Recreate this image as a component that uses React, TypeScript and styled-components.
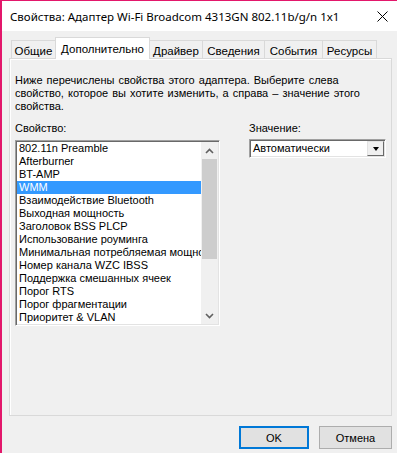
import styled, { createGlobalStyle } from 'styled-components'

const GlobalStyle = createGlobalStyle`
  html, body {
    margin: 0;
    padding: 0;
    background: #f0f0f0;
  }
  body {
    font-family: "Liberation Sans", Arial, sans-serif;
    color: #000;
  }
`

const Window = styled.div`
  width: 397px;
  height: 453px;
  box-sizing: border-box;
  border-top: 1px solid #e3176b;
  border-left: 2px solid #e3176b;
  background: #f0f0f0;
  display: flex;
  flex-direction: column;
  overflow: hidden;
`

const TitleBar = styled.div`
  height: 30px;
  flex-shrink: 0;
  background: #fff;
  display: flex;
  align-items: center;
  justify-content: space-between;
  padding: 0 6px 0 8px;
`

const Title = styled.span`
  font-family: "Noto Sans", "Open Sans", sans-serif;
  font-size: 11.5px;
  white-space: nowrap;
`

const CloseButton = styled.div`
  width: 18px;
  height: 18px;
  display: flex;
  align-items: center;
  justify-content: center;
`

const Body = styled.div`
  flex: 1;
  display: flex;
  flex-direction: column;
  padding: 6px 5px 0 7px;
`

const TabStrip = styled.div`
  height: 22px;
  display: flex;
  align-items: flex-end;
  padding-left: 3px;
  margin-bottom: -1px;
  position: relative;
  z-index: 1;
`

const Tab = styled.div<{ $active?: boolean; $w: number }>`
  box-sizing: border-box;
  width: ${({ $w }) => $w}px;
  height: ${({ $active }) => ($active ? 22 : 18)}px;
  margin-bottom: ${({ $active }) => ($active ? 0 : 1)}px;
  margin-left: -1px;
  border: 1px solid #d9d9d9;
  border-bottom: none;
  background: ${({ $active }) => ($active ? '#fff' : '#f0f0f0')};
  font-family: "Liberation Sans", Arial, sans-serif;
  font-size: 11.5px;
  display: flex;
  justify-content: center;
  align-items: center;
  padding-top: ${({ $active }) => ($active ? 0 : 2)}px;
  white-space: nowrap;
`

const Panel = styled.div`
  box-sizing: border-box;
  height: 358px;
  flex-shrink: 0;
  border: 1px solid #d9d9d9;
  box-shadow: inset 1px 1px 0 #fff;
  padding: 15px 5px 0 5px;
  display: flex;
  flex-direction: column;
`

const Description = styled.p`
  margin: 0 0 9px;
  font-size: 11px;
  line-height: 13px;
  word-spacing: 1px;
`

const Columns = styled.div`
  display: flex;
  gap: 29px;
`

const Column = styled.div<{ $w: number }>`
  width: ${({ $w }) => $w}px;
  display: flex;
  flex-direction: column;
`

const Label = styled.div`
  font-size: 11px;
  line-height: 13px;
  margin-bottom: 5px;
`

const ListBox = styled.div`
  box-sizing: border-box;
  height: 186px;
  border: 1px solid;
  border-color: #a0a0a0 #fff #fff #a0a0a0;
  box-shadow: inset 1px 1px 0 #696969, inset -1px -1px 0 #e3e3e3;
  background: #fff;
  padding: 1px;
  display: flex;
`

const Items = styled.div`
  flex: 1;
  min-width: 0;
  display: flex;
  flex-direction: column;
`

const Item = styled.div<{ $selected?: boolean }>`
  height: 13px;
  line-height: 13px;
  font-size: 11px;
  padding-left: 2px;
  white-space: nowrap;
  overflow: hidden;
  background: ${({ $selected }) => ($selected ? '#3399ff' : 'transparent')};
  color: ${({ $selected }) => ($selected ? '#fff' : '#000')};
`

const ScrollBar = styled.div`
  width: 17px;
  background: #f0f0f0;
  display: flex;
  flex-direction: column;
`

const ScrollArrow = styled.div`
  height: 17px;
  display: flex;
  align-items: center;
  justify-content: center;
`

const Track = styled.div`
  flex: 1;
`

const Thumb = styled.div`
  height: 100px;
  margin: 0 1px;
  background: #cdcdcd;
`

const Select = styled.div`
  box-sizing: border-box;
  height: 19px;
  margin-top: -1px;
  border: 1px solid;
  border-color: #a0a0a0 #fff #fff #a0a0a0;
  box-shadow: inset 1px 1px 0 #696969, inset -1px -1px 0 #e3e3e3;
  background: #fff;
  padding: 1px;
  display: flex;
  align-items: stretch;
`

const SelectValue = styled.div`
  flex: 1;
  font-size: 11px;
  line-height: 15px;
  padding-left: 2px;
`

const DropButton = styled.div`
  box-sizing: border-box;
  width: 17px;
  background: #f0f0f0;
  border: 1px solid;
  border-color: #e3e3e3 #696969 #696969 #e3e3e3;
  display: flex;
  align-items: center;
  justify-content: center;
`

const Triangle = styled.div`
  width: 0;
  height: 0;
  border-left: 3.5px solid transparent;
  border-right: 3.5px solid transparent;
  border-top: 4px solid #000;
`

const Footer = styled.div`
  display: flex;
  justify-content: flex-end;
  gap: 10px;
  padding-top: 10px;
`

const Button = styled.button<{ $primary?: boolean; $w: number }>`
  box-sizing: border-box;
  width: ${({ $w }) => $w}px;
  height: 23px;
  padding: 0;
  background: #e1e1e1;
  border: 1px solid ${({ $primary }) => ($primary ? '#0078d7' : '#adadad')};
  box-shadow: ${({ $primary }) => ($primary ? 'inset 0 0 0 1px #0078d7' : 'none')};
  font-family: "Liberation Sans", Arial, sans-serif;
  font-size: 11px;
  color: #000;
`

const tabs = [
  { label: 'Общие', w: 45 },
  { label: 'Дополнительно', w: 95, active: true },
  { label: 'Драйвер', w: 54 },
  { label: 'Сведения', w: 63 },
  { label: 'События', w: 59 },
  { label: 'Ресурсы', w: 55 },
]

const properties = [
  '802.11n Preamble',
  'Afterburner',
  'BT-AMP',
  'WMM',
  'Взаимодействие Bluetooth',
  'Выходная мощность',
  'Заголовок BSS PLCP',
  'Использование роуминга',
  'Минимальная потребляемая мощность',
  'Номер канала WZC IBSS',
  'Поддержка смешанных ячеек',
  'Порог RTS',
  'Порог фрагментации',
  'Приоритет & VLAN',
]

const Chevron = ({ up }: { up?: boolean }) => (
  <svg width="9" height="6" viewBox="0 0 9 6">
    <path
      d={up ? 'M1 5 L4.5 1.5 L8 5' : 'M1 1 L4.5 4.5 L8 1'}
      fill="none"
      stroke="#606060"
      strokeWidth="1.6"
    />
  </svg>
)

export default function App() {
  return (
    <>
      <GlobalStyle />
      <Window>
        <TitleBar>
          <Title>Свойства: Адаптер Wi-Fi Broadcom 4313GN 802.11b/g/n 1x1</Title>
          <CloseButton>
            <svg width="11" height="11" viewBox="0 0 11 11">
              <path d="M0.5 0.5 L10.5 10.5 M10.5 0.5 L0.5 10.5" stroke="#000" strokeWidth="1" />
            </svg>
          </CloseButton>
        </TitleBar>
        <Body>
          <TabStrip>
            {tabs.map((t) => (
              <Tab key={t.label} $w={t.w} $active={t.active}>
                {t.label}
              </Tab>
            ))}
          </TabStrip>
          <Panel>
            <Description>
              Ниже перечислены свойства этого адаптера. Выберите слева
              <br />
              свойство, которое вы хотите изменить, а справа – значение этого
              <br />
              свойства.
            </Description>
            <Columns>
              <Column $w={205}>
                <Label>Свойство:</Label>
                <ListBox>
                  <Items>
                    {properties.map((p) => (
                      <Item key={p} $selected={p === 'WMM'}>
                        {p}
                      </Item>
                    ))}
                  </Items>
                  <ScrollBar>
                    <ScrollArrow>
                      <Chevron up />
                    </ScrollArrow>
                    <Track>
                      <Thumb />
                    </Track>
                    <ScrollArrow>
                      <Chevron />
                    </ScrollArrow>
                  </ScrollBar>
                </ListBox>
              </Column>
              <Column $w={137}>
                <Label>Значение:</Label>
                <Select>
                  <SelectValue>Автоматически</SelectValue>
                  <DropButton>
                    <Triangle />
                  </DropButton>
                </Select>
              </Column>
            </Columns>
          </Panel>
          <Footer>
            <Button $primary $w={70}>OK</Button>
            <Button $w={73}>Отмена</Button>
          </Footer>
        </Body>
      </Window>
    </>
  )
}
